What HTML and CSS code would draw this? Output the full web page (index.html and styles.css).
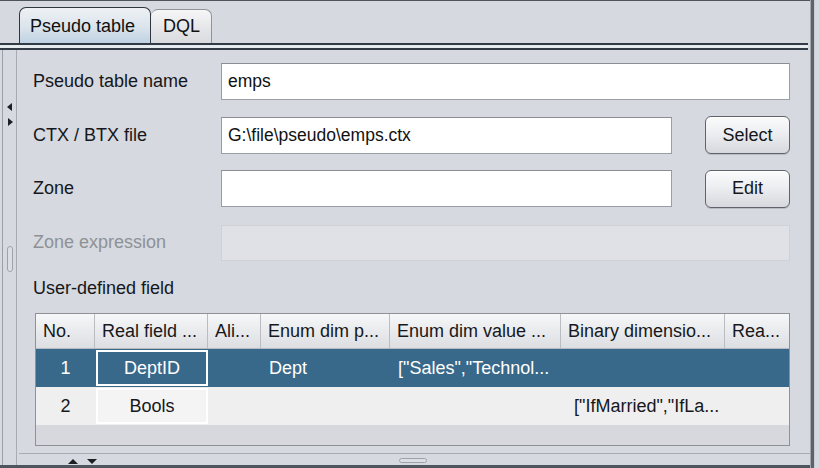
FILE: index.html
```html
<!DOCTYPE html>
<html>
<head>
<meta charset="utf-8">
<title>Pseudo table</title>
<link rel="stylesheet" href="styles.css">
</head>
<body>
<div class="app">
  <div class="main">
    <div class="tabs">
      <div class="tab tab-active">Pseudo table</div>
      <div class="tab tab-plain">DQL</div>
    </div>
    <div class="tabline"></div>
    <div class="lower">
      <div class="vsplit">
        <span class="tri tri-left"></span>
        <span class="tri tri-right"></span>
        <span class="vhandle"></span>
      </div>
      <div class="rightcol">
        <div class="panel">
          <div class="form">
            <div class="lbl">Pseudo table name</div>
            <div class="field span3">emps</div>

            <div class="lbl">CTX / BTX file</div>
            <div class="field">G:\file\pseudo\emps.ctx</div>
            <div class="gap"></div>
            <button class="btn">Select</button>

            <div class="lbl">Zone</div>
            <div class="field"></div>
            <div class="gap"></div>
            <button class="btn">Edit</button>

            <div class="lbl lbl-disabled">Zone expression</div>
            <div class="field field-disabled span3"></div>
          </div>
          <div class="section-label">User-defined field</div>
          <div class="gtable">
            <div class="grow ghead">
              <div class="hc">No.</div>
              <div class="hc">Real field ...</div>
              <div class="hc">Ali...</div>
              <div class="hc">Enum dim p...</div>
              <div class="hc">Enum dim value ...</div>
              <div class="hc">Binary dimensio...</div>
              <div class="hc hc-last">Rea...</div>
            </div>
            <div class="grow drow drow-sel">
              <div class="dc dc-center">1</div>
              <div class="dc dc-center dc-real"><span class="realbox">DeptID</span></div>
              <div class="dc"></div>
              <div class="dc dc-pad">Dept</div>
              <div class="dc dc-pad">["Sales","Technol...</div>
              <div class="dc"></div>
              <div class="dc"></div>
            </div>
            <div class="grow drow drow-alt">
              <div class="dc dc-center">2</div>
              <div class="dc dc-center dc-real"><span class="realbox realbox-light">Bools</span></div>
              <div class="dc"></div>
              <div class="dc"></div>
              <div class="dc"></div>
              <div class="dc dc-pad2">["IfMarried","IfLa...</div>
              <div class="dc"></div>
            </div>
          </div>
        </div>
        <div class="hsplit">
          <span class="tri tri-up"></span>
          <span class="tri tri-down"></span>
          <span class="hhandle"></span>
        </div>
      </div>
    </div>
    <div class="bottomline"></div>
  </div>
  <div class="edge"></div>
</div>
</body>
</html>
```

FILE: styles.css
```css
html, body {
  margin: 0;
  padding: 0;
}
body {
  width: 819px;
  height: 468px;
  overflow: hidden;
  background: #d6d9df;
  font-family: "Liberation Sans", Arial, sans-serif;
  font-size: 18px;
  color: #111;
}
.app {
  display: flex;
  width: 819px;
  height: 468px;
}
.main {
  width: 810px;
  display: flex;
  flex-direction: column;
  border-top: 1px solid #4e545b;
  box-sizing: border-box;
}
.edge {
  width: 9px;
  background: linear-gradient(to right, #a4a8ae 0 1px, #5d636b 1px 4px, #c9ccd2 4px 5px, #d6d9df 5px);
}

/* tabs */
.tabs {
  height: 42px;
  display: flex;
  align-items: flex-end;
  padding-left: 19px;
}
.tab {
  box-sizing: border-box;
  display: flex;
  align-items: center;
  border-radius: 7px 7px 0 0;
}
.tab-active {
  width: 132px;
  height: 36px;
  border: 1px solid #2e3640;
  border-bottom: none;
  background: linear-gradient(#eef1f4, #dbe4ec 55%, #bfd2e3);
  padding-top: 1px;
  padding-left: 10px;
}
.tab-plain {
  width: 61px;
  height: 34px;
  border: 1px solid #8f949b;
  border-bottom: none;
  border-left: none;
  background: linear-gradient(#f6f6f7, #e4e5e8 60%, #d9dbdf);
  padding-left: 12px;
}
.tabline {
  height: 7px;
  box-sizing: border-box;
  border-top: 2px solid #313a45;
  border-bottom: 2px solid #313a45;
  background: #e6ebf0;
  margin-right: 2px;
}

/* lower */
.lower {
  flex: 1;
  display: flex;
}
.vsplit {
  position: relative;
  width: 13px;
  margin-left: 2px;
  margin-right: 2px;
  border-left: 1px solid #9b9fa6;
  border-right: 1px solid #a9adb3;
  background: #d6d9df;
}
.tri {
  position: absolute;
  width: 0;
  height: 0;
}
.tri-left {
  left: 4px;
  top: 53px;
  border-top: 4px solid transparent;
  border-bottom: 4px solid transparent;
  border-right: 5px solid #1d1f22;
}
.tri-right {
  left: 5px;
  top: 68px;
  border-top: 4px solid transparent;
  border-bottom: 4px solid transparent;
  border-left: 5px solid #1d1f22;
}
.vhandle {
  position: absolute;
  left: 4px;
  top: 196px;
  width: 4px;
  height: 24px;
  border: 1px solid #9fa3a9;
  border-radius: 3px;
  background: #dcdee3;
}
.rightcol {
  flex: 1;
  display: flex;
  flex-direction: column;
}
.panel {
  height: 403px;
  box-sizing: border-box;
  padding: 13px 18px 0 14px;
}
.form {
  display: grid;
  grid-template-columns: 188px 451px 33px 85px;
  grid-auto-rows: 37px;
  row-gap: 16.7px;
  align-items: center;
}
.lbl {
  color: #15171a;
}
.lbl-disabled {
  color: #8e9196;
}
.field {
  height: 37px;
  box-sizing: border-box;
  background: #fff;
  border: 1px solid #9a9ea4;
  border-top-color: #8a8e94;
  padding-left: 6px;
  display: flex;
  align-items: center;
  color: #111;
  font-size: 17.5px;
}
.span3 {
  grid-column: span 3;
}
.field-disabled {
  height: 36px;
  background: #e0e1e6;
  border-color: #cfd1d6;
}
.btn {
  height: 38px;
  width: 85px;
  box-sizing: border-box;
  font-family: inherit;
  font-size: 18px;
  color: #15171a;
  border: 1px solid #5f646a;
  border-radius: 6px;
  background: linear-gradient(#fbfbfc, #eceef1 45%, #d6d8dd);
  box-shadow: inset 0 1px 0 #ffffff, 0 1px 0 #b9bcc2;
  padding: 0;
}
.section-label {
  margin-top: 17px;
  height: 20px;
  line-height: 20px;
  color: #15171a;
}

/* table */
.gtable {
  margin-top: 15px;
  margin-left: 2px;
  width: 755px;
  height: 133px;
  box-sizing: border-box;
  border: 1px solid #8e9297;
  background: #d6d8dd;
}
.grow {
  display: grid;
  grid-template-columns: 59px 113px 53px 129px 171px 164px 64px;
}
.ghead {
  height: 35px;
  box-sizing: border-box;
  background: linear-gradient(#f6f7f8, #e7e8eb 60%, #dcdee2);
  border-bottom: 1px solid #b7bac0;
}
.hc {
  display: flex;
  align-items: center;
  padding-left: 7px;
  border-right: 1px solid #b9bcc1;
  white-space: nowrap;
  overflow: hidden;
  color: #16181b;
}
.hc-last {
  border-right: none;
}
.drow {
  height: 38px;
}
.drow-sel {
  background: #39698a;
  color: #ffffff;
}
.drow-alt {
  background: #efeff0;
  color: #16181b;
}
.dc {
  display: flex;
  align-items: center;
  white-space: nowrap;
  overflow: hidden;
}
.dc-center {
  justify-content: center;
}
.dc-pad {
  padding-left: 8px;
}
.dc-pad2 {
  padding-left: 13px;
}
.dc-real {
  padding: 1px 0 1px 1px;
}
.realbox {
  box-sizing: border-box;
  width: 100%;
  height: 100%;
  border: 2px solid #ffffff;
  display: flex;
  align-items: center;
  justify-content: center;
}
.realbox-light {
  background: #f4f4f5;
}

/* bottom splitter */
.hsplit {
  position: relative;
  height: 12px;
  border-top: 1px solid #a8acb2;
  box-sizing: border-box;
}
.tri-up {
  left: 49px;
  top: 5px;
  border-left: 5px solid transparent;
  border-right: 5px solid transparent;
  border-bottom: 5px solid #1d1f22;
}
.tri-down {
  left: 68px;
  top: 5px;
  border-left: 5px solid transparent;
  border-right: 5px solid transparent;
  border-top: 5px solid #1d1f22;
}
.hhandle {
  position: absolute;
  left: 380px;
  top: 4px;
  width: 26px;
  height: 3px;
  border: 1px solid #9fa3a9;
  border-radius: 3px;
  background: #dcdee3;
}
.bottomline {
  height: 3px;
  background: #4f555c;
}
```
